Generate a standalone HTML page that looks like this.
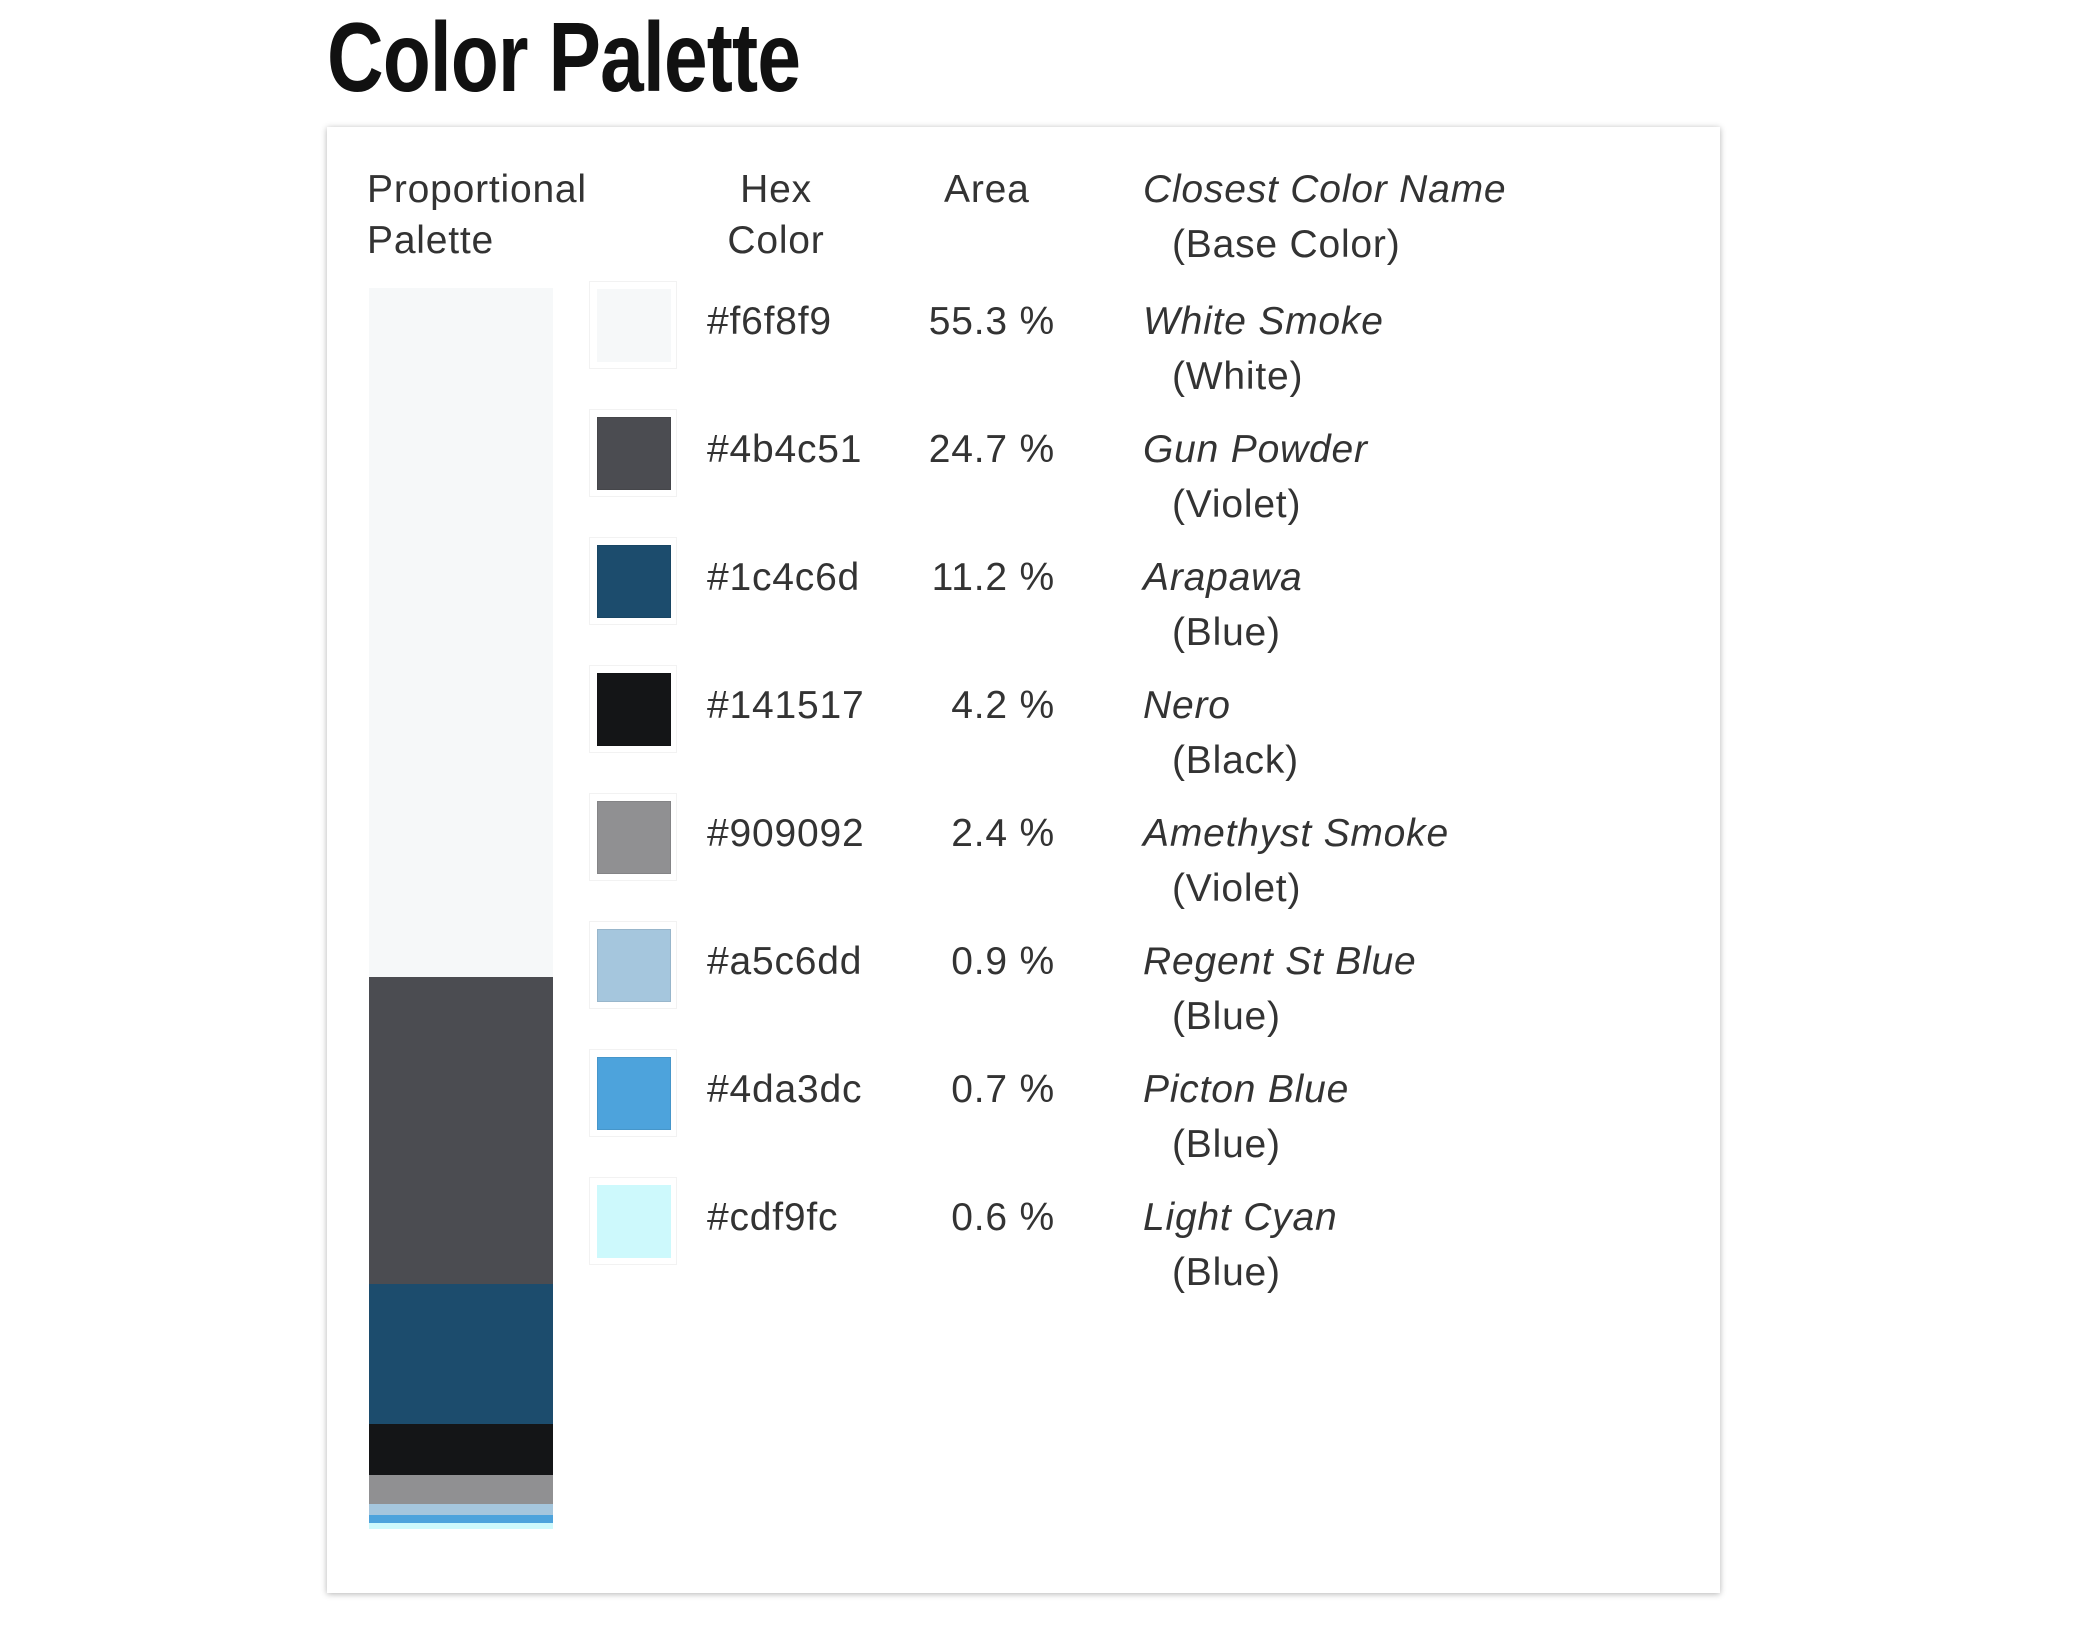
<!DOCTYPE html>
<html><head><meta charset="utf-8"><style>
*{margin:0;padding:0;box-sizing:border-box}
body{width:2090px;height:1628px;background:#fff;position:relative;overflow:hidden;font-family:"Liberation Sans",sans-serif;color:#333}
.t{position:absolute;white-space:nowrap;font-size:39px;line-height:51px;letter-spacing:0.8px}
h1{position:absolute;left:327px;top:2px;font-family:"Liberation Sans",sans-serif;font-weight:bold;font-size:98px;line-height:110px;color:#111;letter-spacing:-1px;transform:scaleX(0.8);transform-origin:left top;white-space:nowrap}
.card{position:absolute;left:327px;top:127px;width:1393px;height:1466px;background:#fff;box-shadow:0 1px 6px rgba(0,0,0,.3)}
.bar{position:absolute;left:369px;width:184px}
.sw{position:absolute;left:589px;width:88px;height:88px;border:1px solid #f2f2f2}
.sw div{position:absolute;left:7px;top:7px;width:74px;height:73px;border:1px solid rgba(0,0,0,.08)}
.i{font-style:italic}
.r{text-align:right;width:200px}
</style></head><body>
<h1>Color Palette</h1>
<div class="card"></div>
<div class="t" style="left:367px;top:164px">Proportional<br>Palette</div>
<div class="t" style="left:721px;top:164px;text-align:center;width:110px">Hex<br>Color</div>
<div class="t" style="left:944px;top:164px">Area</div>
<div class="t i" style="left:1143px;top:164px">Closest Color Name</div>
<div class="t" style="left:1172px;top:219px">(Base Color)</div>

<div class="bar" style="top:288px;height:689px;background:#f6f8f9"></div>
<div class="bar" style="top:977px;height:307px;background:#4b4c51"></div>
<div class="bar" style="top:1284px;height:140px;background:#1c4c6d"></div>
<div class="bar" style="top:1424px;height:51px;background:#141517"></div>
<div class="bar" style="top:1475px;height:29px;background:#909092"></div>
<div class="bar" style="top:1504px;height:11px;background:#a5c6dd"></div>
<div class="bar" style="top:1515px;height:8px;background:#4da3dc"></div>
<div class="bar" style="top:1523px;height:6px;background:#cdf9fc"></div>

<div class="sw" style="top:281px"><div style="background:#f6f8f9;border-color:#f6f8f9"></div></div>
<div class="t" style="left:707px;top:296px">#f6f8f9</div>
<div class="t r" style="left:855px;top:296px">55.3 %</div>
<div class="t i" style="left:1143px;top:296px">White Smoke</div>
<div class="t" style="left:1172px;top:351px">(White)</div>

<div class="sw" style="top:409px"><div style="background:#4b4c51"></div></div>
<div class="t" style="left:707px;top:424px">#4b4c51</div>
<div class="t r" style="left:855px;top:424px">24.7 %</div>
<div class="t i" style="left:1143px;top:424px">Gun Powder</div>
<div class="t" style="left:1172px;top:479px">(Violet)</div>

<div class="sw" style="top:537px"><div style="background:#1c4c6d"></div></div>
<div class="t" style="left:707px;top:552px">#1c4c6d</div>
<div class="t r" style="left:855px;top:552px">11.2 %</div>
<div class="t i" style="left:1143px;top:552px">Arapawa</div>
<div class="t" style="left:1172px;top:607px">(Blue)</div>

<div class="sw" style="top:665px"><div style="background:#141517"></div></div>
<div class="t" style="left:707px;top:680px">#141517</div>
<div class="t r" style="left:855px;top:680px">4.2 %</div>
<div class="t i" style="left:1143px;top:680px">Nero</div>
<div class="t" style="left:1172px;top:735px">(Black)</div>

<div class="sw" style="top:793px"><div style="background:#909092"></div></div>
<div class="t" style="left:707px;top:808px">#909092</div>
<div class="t r" style="left:855px;top:808px">2.4 %</div>
<div class="t i" style="left:1143px;top:808px">Amethyst Smoke</div>
<div class="t" style="left:1172px;top:863px">(Violet)</div>

<div class="sw" style="top:921px"><div style="background:#a5c6dd"></div></div>
<div class="t" style="left:707px;top:936px">#a5c6dd</div>
<div class="t r" style="left:855px;top:936px">0.9 %</div>
<div class="t i" style="left:1143px;top:936px">Regent St Blue</div>
<div class="t" style="left:1172px;top:991px">(Blue)</div>

<div class="sw" style="top:1049px"><div style="background:#4da3dc"></div></div>
<div class="t" style="left:707px;top:1064px">#4da3dc</div>
<div class="t r" style="left:855px;top:1064px">0.7 %</div>
<div class="t i" style="left:1143px;top:1064px">Picton Blue</div>
<div class="t" style="left:1172px;top:1119px">(Blue)</div>

<div class="sw" style="top:1177px"><div style="background:#cdf9fc;border-color:#cdf9fc"></div></div>
<div class="t" style="left:707px;top:1192px">#cdf9fc</div>
<div class="t r" style="left:855px;top:1192px">0.6 %</div>
<div class="t i" style="left:1143px;top:1192px">Light Cyan</div>
<div class="t" style="left:1172px;top:1247px">(Blue)</div>
</body></html>
